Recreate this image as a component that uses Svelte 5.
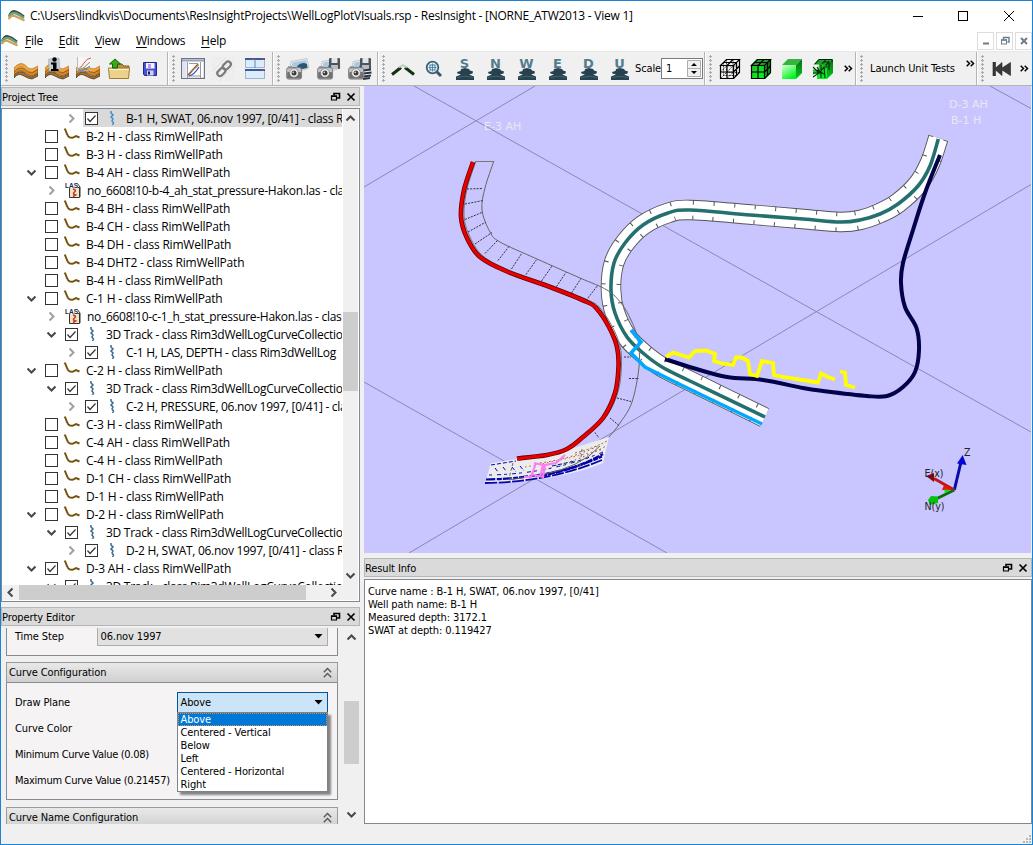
<script>
  // ---- project tree -------------------------------------------------------
  const tree = [
    { d: 3, a: 'closed', c: true, i: 'curve', t: 'B-1 H, SWAT, 06.nov 1997, [0/41] - class R', sel: true },
    { d: 1, c: false, i: 'well', t: 'B-2 H - class RimWellPath' },
    { d: 1, c: false, i: 'well', t: 'B-3 H - class RimWellPath' },
    { d: 1, a: 'open', c: false, i: 'well', t: 'B-4 AH - class RimWellPath' },
    { d: 2, a: 'closed', i: 'las', t: 'no_6608!10-b-4_ah_stat_pressure-Hakon.las - cla' },
    { d: 1, c: false, i: 'well', t: 'B-4 BH - class RimWellPath' },
    { d: 1, c: false, i: 'well', t: 'B-4 CH - class RimWellPath' },
    { d: 1, c: false, i: 'well', t: 'B-4 DH - class RimWellPath' },
    { d: 1, c: false, i: 'well', t: 'B-4 DHT2 - class RimWellPath' },
    { d: 1, c: false, i: 'well', t: 'B-4 H - class RimWellPath' },
    { d: 1, a: 'open', c: false, i: 'well', t: 'C-1 H - class RimWellPath' },
    { d: 2, a: 'closed', i: 'las', t: 'no_6608!10-c-1_h_stat_pressure-Hakon.las - class' },
    { d: 2, a: 'open', c: true, i: 'curve', t: '3D Track - class Rim3dWellLogCurveCollectio' },
    { d: 3, a: 'closed', c: true, i: 'curve', t: 'C-1 H, LAS, DEPTH - class Rim3dWellLog' },
    { d: 1, a: 'open', c: false, i: 'well', t: 'C-2 H - class RimWellPath' },
    { d: 2, a: 'open', c: true, i: 'curve', t: '3D Track - class Rim3dWellLogCurveCollectio' },
    { d: 3, a: 'closed', c: true, i: 'curve', t: 'C-2 H, PRESSURE, 06.nov 1997, [0/41] - cla' },
    { d: 1, c: false, i: 'well', t: 'C-3 H - class RimWellPath' },
    { d: 1, c: false, i: 'well', t: 'C-4 AH - class RimWellPath' },
    { d: 1, c: false, i: 'well', t: 'C-4 H - class RimWellPath' },
    { d: 1, c: false, i: 'well', t: 'D-1 CH - class RimWellPath' },
    { d: 1, c: false, i: 'well', t: 'D-1 H - class RimWellPath' },
    { d: 1, a: 'open', c: false, i: 'well', t: 'D-2 H - class RimWellPath' },
    { d: 2, a: 'open', c: true, i: 'curve', t: '3D Track - class Rim3dWellLogCurveCollectio' },
    { d: 3, a: 'closed', c: true, i: 'curve', t: 'D-2 H, SWAT, 06.nov 1997, [0/41] - class R' },
    { d: 1, a: 'open', c: true, i: 'well', t: 'D-3 AH - class RimWellPath' },
    { d: 2, a: 'open', c: true, i: 'curve', t: '3D Track - class Rim3dWellLogCurveCollectio' }
  ];
  const menus = ['File', 'Edit', 'View', 'Windows', 'Help'];
  const planes = ['Above', 'Centered - Vertical', 'Below', 'Left', 'Centered - Horizontal', 'Right'];
  const info = ['Curve name : B-1 H, SWAT, 06.nov 1997, [0/41]', 'Well path name: B-1 H', 'Measured depth: 3172.1', 'SWAT at depth: 0.119427'];

  // ---- 3D view geometry ---------------------------------------------------
  // Catmull-Rom spline through the points, as cubic Bezier segments.
  function smooth(p) {
    let s = `M${p[0][0]} ${p[0][1]}`;
    for (let i = 0; i < p.length - 1; i++) {
      const a = p[i - 1] ?? p[i], b = p[i], c = p[i + 1], e = p[i + 2] ?? c;
      s += `C${b[0] + (c[0] - a[0]) / 6} ${b[1] + (c[1] - a[1]) / 6} ${c[0] - (e[0] - b[0]) / 6} ${c[1] - (e[1] - b[1]) / 6} ${c[0]} ${c[1]}`;
    }
    return s;
  }
  const teal = smooth([[938.3, 139], [930, 166], [918, 186], [898, 204], [880, 214], [860, 220], [840, 222], [803, 219], [750, 215], [690, 210], [668, 213], [643, 225], [625, 243], [614, 263], [611, 290], [615, 313], [627, 337], [643, 353], [662, 367], [690, 381], [765, 417]]);
  const ribbon = smooth([[938.3, 138], [930, 163], [918, 184], [898, 203], [880, 213], [860, 220], [840, 222], [803, 219], [750, 214.5], [690, 210], [668, 213], [643, 225], [625, 243], [614, 263], [611, 290], [615, 313], [627, 337], [643, 353], [662, 367], [690, 381], [764.5, 417.5]]);
  const red = smooth([[473, 162], [464, 190], [461, 217], [467, 238], [480, 257], [507, 271.5], [550, 287], [587, 302], [597, 309], [609, 327], [617, 347], [618.5, 367], [615, 393], [603, 418], [583, 437], [567, 449], [547, 455], [517, 458.5]]);
  const outer = smooth([[493.7, 161.5], [485, 188], [482, 210], [490, 232], [500, 242], [537, 259], [580, 278], [607, 290], [621, 303], [631, 320], [638, 340], [639, 367], [632, 402], [620, 423], [608, 438], [593, 453], [560, 470], [510, 479]]);
  const navy = smooth([[940, 155], [925, 193], [913, 230], [903, 263], [901, 283], [905, 307], [916.5, 328], [919, 350], [915, 372], [903, 387], [887, 396], [867, 396], [823, 391], [803, 388], [763, 380], [727, 377], [693, 368], [665, 359]]);
  const rungs = [[467, 189, 483, 188.5], [465, 204, 483, 200.5], [465, 219.5, 483, 212], [468, 232, 486, 222], [475, 244, 492, 232.5], [485, 253.5, 497.5, 240.5], [498, 260.5, 509, 246.5], [511.5, 269, 522, 253], [526, 274.5, 537, 259], [541.5, 281, 552, 266], [556.5, 286.5, 566, 272.5], [571.5, 293, 581, 278.5], [586, 300.5, 598, 285], [624, 357, 631, 357], [629, 378.5, 639, 378.5], [617, 398, 631, 401.5], [610, 418, 619, 425.5], [595, 432.5, 599, 438]];

  const views = ['S', 'N', 'W', 'E', 'D', 'U'];
</script>

{#snippet logo(w)}
  <svg width={w} height="13" viewBox="0 0 16 13" class="logo">
    <path d="M.5 7Q3 1.500 6.500 2.200T15.500 7.500" stroke="#384b3c" stroke-width="2" fill="none" />
    <path d="M.5 8Q3 3.500 6 4T15.500 9" stroke="#6aa276" stroke-width="2.600" fill="none" />
    <path d="M0 10Q3 5.800 6 7T16 11.500" stroke="#d5a158" stroke-width="2.200" fill="none" />
  </svg>
{/snippet}

{#snippet winBtns()}
  <svg class="dockbtns" width="28" height="12" viewBox="0 0 28 12" fill="none" stroke="#000">
    <path d="M4 4V2.500H9.500V7H7" stroke-width="1.600" /><path d="M1.500 5.300H6.500V9H1.500z" stroke-width="1.200" /><path d="M1 5h6" stroke-width="1.500" />
    <path d="M17.500 2.500L24.500 9.500M24.500 2.500L17.500 9.500" stroke-width="1.700" />
  </svg>
{/snippet}

{#snippet chev(dir)}
  <svg class="chev" width="11" height="11" viewBox="0 0 11 11" fill="none" stroke={dir === 'treeclosed' ? '#a0a0a0' : '#484848'} stroke-width="2">
    {#if dir === 'up'}<path d="M1.500 7.500L5.500 3.500L9.500 7.500" />
    {:else if dir === 'down'}<path d="M1.500 3.500L5.500 7.500L9.500 3.500" />
    {:else if dir === 'left'}<path d="M7.500 1.500L3.500 5.500L7.500 9.500" />
    {:else}<path d="M3.500 1.500L7.500 5.500L3.500 9.500" />{/if}
  </svg>
{/snippet}

{#snippet layers()}
  <path d="M0 11Q6 4 11 8Q14 12 18 12L24 9V12L18 15.500Q14 15 10 11T0 15z" fill="#f7a530" stroke="#a8610e" stroke-width=".6" />
  <path d="M0 15.500Q6 8.500 10 12Q14 16 18 16L24 12.500V15.500L18 19Q14 18.500 10 15T0 18z" fill="#e08a20" stroke="#673b0c" stroke-width=".7" />
  <path d="M0 19Q6 12.500 10 16Q14 20 18 20L24 16.500V19L18 22Q14 21.500 9 18.500T0 21z" fill="#a87331" stroke="#4e3312" stroke-width=".8" />
{/snippet}

{#snippet camera(n)}
  <svg width="24" height="22" viewBox="0 0 24 22">
    <path d="M5 3.500L21 .5L23 10L18 12H3.500z" fill="#e9edf0" stroke="#a9b0b6" stroke-width=".6" />
    <path d="M6.500 4.500L20 2L21.500 9L16 11H5z" fill="#a9cbe2" /><path d="M11 8Q16 3 21 6L21.500 10L14 11.500z" fill="#2f5470" />
    {#if n > 0}
      <rect x="12" y="0" width="11" height="11" rx="1" fill="#505357" /><rect x="14.500" y="0" width="6" height="5" fill="#e2e6ea" /><rect x="14" y="7" width="7" height="4" fill="#b8bec6" />
    {/if}
    {#if n > 1}<path d="M15 12.500L23 11.500M16 15.500L23.500 14.500M16 18.500L23 17.500M15 21L22 20" stroke="#2a3542" stroke-width="1.800" />{/if}
    <rect x=".6" y="9.600" width="15" height="11.500" rx="2" fill="#c2c2c2" stroke="#6a6a6a" stroke-width=".8" /><rect x="1.200" y="14" width="13.800" height="6.500" rx="1" fill="#707070" />
    <circle cx="8" cy="15" r="4.300" fill="#f4f4f4" stroke="#777" stroke-width=".6" /><circle cx="8" cy="15" r="2.500" fill="#3c3c3c" /><circle cx="7.300" cy="14.300" r=".9" fill="#ccc" />
    <rect x="2" y="8.300" width="4" height="2" fill="#888" />
  </svg>
{/snippet}

{#snippet cube(kind)}
  <svg width="22" height="22" viewBox="0 0 22 22">
    <defs>
      <linearGradient id="cf-{kind}" x1="0" y1="0" x2=".6" y2="1"><stop offset="0" stop-color={kind === 'surf' ? '#d8ffd8' : '#36b336'} /><stop offset="1" stop-color="#00f51c" /></linearGradient>
      <linearGradient id="cs-{kind}" x1="0" y1="0" x2="0" y2="1"><stop offset="0" stop-color="#0a6b14" /><stop offset="1" stop-color="#00c81b" /></linearGradient>
    </defs>
    {#if kind !== 'wire'}
      <path d="M1 7L7 1H21L15 7z" fill={kind === 'surf' ? '#35b33e' : '#1fa02a'} /><path d="M1 7H15V21H1z" fill="url(#cf-{kind})" /><path d="M15 7L21 1V15L15 21z" fill="url(#cs-{kind})" />
    {/if}
    {#if kind === 'wire' || kind === 'grid'}
      <path d="M1.500 7.500L7.500 1.500H20.500L14.500 7.500zM1.500 7.500V20.500H14.500V7.500M14.500 20.500L20.500 14.500V1.500M8 7.500V20.500M1.500 14H14.500M8 7.500L14 1.500M4.500 4.500H17.500V17.500M14.500 14L20.500 8" fill="none" stroke="#000" stroke-width="1.200" />
    {/if}
    {#if kind === 'wire'}<path d="M7.500 1.500V14.500H20.500M1.500 20.500L7.500 14.500M4.500 4.500V17.500H17.500M14 1.500V14.500M7.500 8H20.500M8 14L14 8M1.500 14L7.500 8M8 20.500L14 14.500" fill="none" stroke="#000" stroke-width=".7" stroke-dasharray="2 1" />{/if}
    {#if kind === 'fault'}
      <path d="M0 6.500H7L6 12L0 11zM0 17L5 15V21H0z" fill="#f0f0f0" /><path d="M7 1.500H20M7 1.500L3 6M14 1.500L10 6M12 4H17M20 1.500V4M14 10V7L17 4V12M1 9L7 15L1 19M5 12L12 16M9 7V20M5 9L8 14L12 9L13 20M1 15H9" fill="none" stroke="#02290a" stroke-width="1.100" />
    {/if}
  </svg>
{/snippet}

{#snippet more()}
  <svg class="more" width="9" height="7" viewBox="0 0 9 7" fill="none" stroke="#000" stroke-width="1.500"><path d="M.7.700L3.500 3.500L.7 6.300M4.700.700L7.500 3.500L4.700 6.300" /></svg>
{/snippet}

<div class="window">
  <header class="title ui">
    {@render logo(17)}
    <span class="caption">C:\Users\lindkvis\Documents\ResInsightProjects\WellLogPlotVIsuals.rsp - ResInsight - [NORNE_ATW2013 - View 1]</span>
    <svg class="sys" width="104" height="12" viewBox="0 0 104 12" fill="none" stroke="#000"><path d="M1 6.500H11" /><rect x="46.500" y="1.500" width="9" height="9" /><path d="M92 1L102 11M102 1L92 11" /></svg>
  </header>

  <nav class="menu ui">
    {@render logo(17)}
    {#each menus as m}<span class="item"><u>{m[0]}</u>{m.slice(1)}</span>{/each}
    <div class="mdi">
      <span><svg width="14" height="14" viewBox="0 0 14 14"><path d="M4 9.500h6" stroke="#6d7c8c" stroke-width="2" /></svg></span>
      <span><svg width="14" height="14" viewBox="0 0 14 14" fill="none" stroke="#6d7c8c"><path d="M5.500 5V3.500H11V8H9.500" stroke-width="1.400" /><rect x="3.500" y="6" width="5" height="4" /><path d="M3 6h6" stroke-width="1.500" /></svg></span>
      <span><svg width="14" height="14" viewBox="0 0 14 14"><path d="M4 4L10 10M10 4L4 10" stroke="#6d7c8c" stroke-width="2" /></svg></span>
    </div>
  </nav>

  <div class="toolbars dlg">
    <section class="tb g1">
      <i class="grip"></i>
      <span class="b"><svg width="24" height="24" viewBox="0 0 24 24">{@render layers()}</svg></span>
      <span class="b"><svg width="24" height="24" viewBox="0 0 24 24">{@render layers()}<path d="M3.500 2L14 1L15 13L4 14z" fill="#c4ccd4" stroke="#9aa3ad" stroke-width=".5" /><circle cx="9.500" cy="2.500" r="2.200" /><path d="M6 5.500h5.500v6.500h2v2H6v-2h2v-4.500H6z" /></svg></span>
      <span class="b"><svg width="24" height="24" viewBox="0 0 24 24">{@render layers()}<path d="M1 0H15V9L1 13.500z" fill="#f6f6f9" /><path d="M1.500 0V14L16 13" stroke="#bbb" fill="none" /><path d="M2 12Q5 11 8 6T15 1" stroke="#e0505a" fill="none" /><path d="M2 13Q8 12 14 5" stroke="#58b058" fill="none" /><path d="M2 14Q9 14 14 9" stroke="#7a7ad8" fill="none" /></svg></span>
      <span class="b"><svg width="24" height="22" viewBox="0 0 24 22"><path d="M10 6h5l2 2h5v5H10z" fill="#b99345" stroke="#7c6026" /><path d="M1.500 10H22.500L21.500 20.500H2.500z" fill="#ead28a" stroke="#a07d33" /><path d="M2 11.500H22" stroke="#fff3c2" /><path d="M8 1L13.500 6H10.500V10H5.500V6H2.500z" fill="#39a81d" stroke="#176307" /></svg></span>
      <span class="b"><svg width="16" height="16" viewBox="0 0 16 16"><path d="M1.500 1.500H14.500V14.500H2.500L1.500 13z" fill="#4a52cf" stroke="#22258c" /><rect x="4" y="2" width="8.500" height="5.500" fill="#f2f5ff" /><path d="M6 4h3M6 6h3" stroke="#70c" stroke-width=".8" /><rect x="5" y="9.500" width="6.500" height="5" fill="#cfd3f2" /><rect x="6" y="10.500" width="2" height="3" fill="#1a1a60" /></svg></span>
    </section>
    <section class="tb g2">
      <i class="grip"></i>
      <span class="b"><svg width="24" height="21" viewBox="0 0 24 21"><rect x=".6" y=".6" width="22.800" height="19.800" fill="#fff" stroke="#6b7484" stroke-width="1.200" /><path d="M1 2.500H23" stroke="#93a3c2" stroke-width="2" /><path d="M1.500 4H5.500V20H1.500z" fill="#dfe5f0" /><path d="M6.500 4V20M19.500 4V20M6 18H19M8 5.500h9" stroke="#999" /><path d="M7 17L17 6" stroke="#e03131" stroke-width="1.300" /><path d="M8 18Q13 17 18 9" stroke="#3a42cf" fill="none" stroke-width="1.200" /><path d="M8 17.500Q11 12 18 7" stroke="#3bb440" fill="none" /></svg></span>
      <span class="b hatched"><svg width="18" height="18" viewBox="0 0 18 18" fill="none" stroke="#7b7b7b" stroke-width="2.200"><rect x="-3.600" y="-2.500" width="9" height="5.500" rx="2.700" transform="translate(11 6) rotate(-45)" /><rect x="-5" y="-2.500" width="9" height="5.500" rx="2.700" transform="translate(6.500 11.500) rotate(-45)" /></svg></span>
      <span class="b"><svg width="20" height="21" viewBox="0 0 20 21"><rect x=".5" y=".5" width="19" height="9" fill="#deebfa" stroke="#9ab4d4" /><rect x=".5" y="11.500" width="19" height="9" fill="#deebfa" stroke="#9ab4d4" /><path d="M0 1H20M0 12H20" stroke="#2f5f9e" stroke-width="2" /><path d="M10 1V10" stroke="#5f86b8" /><path d="M7 1h2M17 1h2M17 12h2" stroke="#d33" stroke-width="1.500" /></svg></span>
    </section>
    <section class="tb g2">
      <i class="grip"></i>
      {#each [0, 1, 2] as n}<span class="b">{@render camera(n)}</span>{/each}
    </section>
    <section class="tb g4">
      <i class="grip"></i>
      <span class="b"><svg width="24" height="14" viewBox="0 0 24 14" fill="none"><path d="M1 12.500L10 5.500" stroke="#12330f" stroke-width="3" /><path d="M23 12.500L14 5.500" stroke="#12330f" stroke-width="3" /><path d="M8 5.500L12 3L16 5.500" stroke="#c3cdc3" stroke-width="1.800" /></svg></span>
      <span class="b"><svg width="18" height="18" viewBox="0 0 18 18" fill="none"><path d="M11 11L16 16" stroke="#39576a" stroke-width="3" /><circle cx="7.500" cy="7.500" r="5.800" fill="#e6f2fa" stroke="#41606f" stroke-width="1.800" /><rect x="5" y="5" width="5" height="5" stroke="#3b7aa0" /><path d="M7.500 3.500v8M3.500 7.500h8" stroke="#5b8aa6" /></svg></span>
      {#each views as v}
        <span class="b view"><b>{v}</b><svg width="18" height="12" viewBox="0 0 18 12"><path d="M5 1L9 0L13 1L14 2.500L17 3.500L16.500 5.500L13 6.500L18 8.500V12H0V8.500L5 6.500L1.500 5.500L1 4L4.500 3z" fill="#27414e" /><path d="M1 9.500Q9 7 17 9.500" stroke="#3f6472" fill="none" /></svg></span>
      {/each}
      <span class="scale">Scale</span>
      <span class="spin"><span>1</span><i><svg width="14" height="17" viewBox="0 0 14 17"><path d="M.5.500H13.500V16.500H.5zM.5 8.500H13.500" fill="#f0f0f0" stroke="#adadad" /><path d="M4 6L7 3L10 6zM4 11L7 14L10 11z" /></svg></i></span>
    </section>
    <section class="tb g5">
      <i class="grip"></i>
      {#each ['wire', 'grid', 'surf', 'fault'] as k}<span class="b">{@render cube(k)}</span>{/each}
      {@render more()}
    </section>
    <section class="tb g6">
      <i class="grip"></i>
      <span class="launch">Launch Unit Tests</span>
      <span class="raise">{@render more()}</span>
    </section>
    <section class="tb g7">
      <i class="grip"></i>
      <span class="b"><svg width="20" height="14" viewBox="0 0 20 14"><path d="M1 0H3.500V6L10 .5V6L18.500 .5V13.500L10 8V13.500L3.500 8V14H1z" fill="#3a3a3a" stroke="#222" stroke-width=".6" /></svg></span>
      {@render more()}
    </section>
  </div>

  <main>
    <div class="left">
      <div class="dock dlg"><span>Project Tree</span>{@render winBtns()}</div>
      <div class="tree">
        <div class="rows ui">
          {#each tree as r}
            <div class="row d{r.d}">
              <span class="arrow">{#if r.a}{@render chev(r.a === 'open' ? 'down' : 'treeclosed')}{/if}</span>
              <div class="cell" class:sel={r.sel}>
                {#if r.c !== undefined}
                  <svg class="check" width="13" height="13" viewBox="0 0 13 13" fill="none"><rect x=".5" y=".5" width="12" height="12" fill="#fff" stroke="#333" />{#if r.c}<path d="M2.500 6.500L5 9.500L10.500 3.500" stroke="#333" stroke-width="1.200" />{/if}</svg>
                {/if}
                <span class="ico {r.i}">
                  {#if r.i === 'well'}<svg width="16" height="13" viewBox="0 0 16 13"><path d="M.8.500L3 6Q4 9 6 9.500L8.500 9.800L12 8L15.500 9.500" fill="none" stroke="#77520e" stroke-width="2" /></svg>
                  {:else if r.i === 'curve'}<svg width="6" height="14" viewBox="0 0 6 14"><path d="M2 0V2L4 4L2 6L4 8L3 10L4.500 12L3.500 14" fill="none" stroke={r.sel ? '#3d8fd0' : '#3a6a92'} stroke-width="1.500" /></svg>
                  {:else}<svg width="16" height="16" viewBox="0 0 16 16"><path d="M4.500 5.500H14.500V15.500H4.500z" fill="#f4e4c4" stroke="#333" /><path d="M12 1L15 5V15" stroke="#333" fill="none" /><path d="M8 7Q12 8 9.500 10T10.500 13L8 14.500" fill="none" stroke="#c0392b" stroke-width="1.600" /><rect width="12.500" height="6" fill="#fff" /><text x="0" y="5.500" class="las-t">LAS</text></svg>{/if}
                </span>
                <span class="txt t-{r.i}">{r.t}</span>
              </div>
            </div>
          {/each}
        </div>
        <div class="vs">{@render chev('up')}<div class="thumb t-tree"></div><div class="grow"></div>{@render chev('down')}</div>
        <div class="hs">{@render chev('left')}<div class="hthumb"></div><div class="grow"></div>{@render chev('right')}</div>
      </div>

      <div class="dock second dlg"><span>Property Editor</span>{@render winBtns()}</div>
      <div class="props dlg">
        <div class="form">
          <div class="box top"><span class="lbl">Time Step</span><div class="combo grey"><span>06.nov 1997</span><svg width="9" height="5" viewBox="0 0 9 5"><path d="M.5 0H8.500L4.500 4.500z" /></svg></div></div>
          <div class="gh"><span>Curve Configuration</span><svg width="9" height="12" viewBox="0 0 9 12" fill="none" stroke="#555" stroke-width="1.300"><path d="M.8 5.200L4.500 1.500L8.200 5.200M.8 10.200L4.500 6.500L8.200 10.200" /></svg></div>
          <div class="box cfg">
            <div class="f"><span class="lbl">Draw Plane</span>
              <div class="combo active"><span>Above</span><svg width="9" height="5" viewBox="0 0 9 5"><path d="M.5 0H8.500L4.500 4.500z" /></svg>
                <ul class="popup">{#each planes as p, i}<li class:on={i === 0}>{p}</li>{/each}</ul>
              </div>
            </div>
            <div class="f"><span class="lbl">Curve Color</span></div>
            <div class="f"><span class="lbl num">Minimum Curve Value (0.08)</span></div>
            <div class="f"><span class="lbl num">Maximum Curve Value (0.21457)</span></div>
          </div>
          <div class="gh last"><span>Curve Name Configuration</span><svg width="9" height="12" viewBox="0 0 9 12" fill="none" stroke="#555" stroke-width="1.300"><path d="M.8 5.200L4.500 1.500L8.200 5.200M.8 10.200L4.500 6.500L8.200 10.200" /></svg></div>
        </div>
        <div class="vs pv">{@render chev('up')}<div class="thumb t-prop"></div><div class="grow"></div>{@render chev('down')}</div>
      </div>
    </div>

    <div class="right">
      <svg class="view3d" width="667" height="467" viewBox="364 86 667 467" fill="none">
        <rect x="364" y="86" width="667" height="467" fill="#c8c5ff" />
        <g stroke="#8a88b4" stroke-width="1">
          <path d="M414 86L1031 432M535 86L364 187M1031 184.500L409 553M364 382L667 553M990 86L1031 108.500" />
        </g>
        <g class="lab"><text x="484" y="130">E-3 AH</text><text x="949" y="108">D-3 AH</text><text x="951" y="124">B-1 H</text></g>

        <path d={ribbon} stroke="#555" stroke-width="20.500" />
        <path d={ribbon} stroke="#fff" stroke-width="18.700" />
        <path d={ribbon} stroke="#555" stroke-width="19.500" stroke-dasharray="1 19.500" />
        <path d={ribbon} stroke="#fff" stroke-width="11" />
        <path d={teal} stroke="#24706e" stroke-width="3.600" />

        <path d={outer} stroke="#666" />
        <path d={red} stroke="#777" transform="translate(3 -1)" />
        <path d="M475 161.500H494" stroke="#777" />
        {#each rungs as r}<path d="M{r[0]} {r[1]}L{r[2]} {r[3]}" stroke="#333" stroke-dasharray="2 1.200" />{/each}

        <path d="M490.700 463.300L517 459L567 450L609 437L603 463Q560 481 485 484z" fill="#ececee" />
        <g stroke="#0404a8">
          <path d="M485 483Q550 482 602 460" stroke-width="1.800" stroke-dasharray="12 1.500" />
          <path d="M486 479.500Q555 478 602 456.500" stroke-width="2.200" stroke-dasharray="9 1.500 5 1" />
          <path d="M540 476Q575 470 603 454" stroke-width="2.400" stroke-dasharray="7 1" />
          <path d="M489 475Q550 474 603 452" stroke-dasharray="3 5 4 3" />
          <path d="M491 465L516 461M495 468l3 4M503 467l3 4M512 467l4 5M520 466l4 5M552 466L575 461" stroke-dasharray="4 2" />
        </g>
        <g stroke-dasharray="1.500 3">
          <path d="M566 463Q588 456 606 446" stroke="#8a3a2a" /><path d="M575 453Q592 449 607 441" stroke="#9a6a2a" stroke-dasharray="2 2" />
          <path d="M525 467Q560 461 604 449" stroke="#b05a20" /><path d="M540 463Q575 458 600 445" stroke="#a03020" /><path d="M556 466L590 458" stroke="#2a8a5a" />
        </g>
        <path d="M600 446Q580 468 540 475T512 478" stroke="#666" /><path d="M513 463L509 478M582 449L580 466" stroke="#666" stroke-dasharray="3 2" />
        <path d="M524 477H531L536 463M540 477L543 465L534 463M531 474L543 477L545 465L556 463L565 455" stroke="#ff7df0" stroke-width="2.200" />
        <path d={red} stroke="#6a0000" stroke-width="4.600" /><path d={red} stroke="#e80000" stroke-width="3" />

        <path d="M631 330L641 342L631 353L645 367L677 383L710 399L762 424" stroke="#00a8ff" stroke-width="3.600" />
        <path d={navy} stroke="#02024a" stroke-width="4" />
        <path d="M666 357L673 352.500L689 357.500L695 351L706 350.500L715 354L714 361L722 363.500L733 365L736 357.500L742 357.500L748 361L750 374L757 376L762 361L773 363L774 375L783 377L818 382.500L821 373.500L828 377L835 379.500M840 371.500L845 372.500L846 385L855 387.500" stroke="#ff0" stroke-width="3.800" />

        <path d="M954.300 490L961 462" stroke="#0a0aa8" stroke-width="3" /><path d="M962.700 455L966.500 465L957 463.500z" fill="#0505d8" />
        <path d="M954.300 490L934 478.500" stroke="#c01515" stroke-width="3" /><path d="M955 490L944 485L942 490z" fill="#f01010" /><path d="M926 476L934 473L934 482z" fill="#8d0808" />
        <path d="M954.300 490L936 499" stroke="#0b6e0b" stroke-width="3" /><path d="M944 489.500L951 490L945 493z" fill="#0ee60e" /><path d="M928 500L931 496L938 496.500L938 503L930 505z" fill="#08c008" />
        <g class="axes"><text x="964" y="456">Z</text><text x="924.500" y="477">E(x)</text><text x="924.500" y="510">N(y)</text></g>
      </svg>
      <div class="dock res dlg"><span>Result Info</span>{@render winBtns()}</div>
      <div class="result dlg">{#each info as l}<div>{l}</div>{/each}</div>
    </div>
  </main>
  <footer><svg width="10" height="10" viewBox="0 0 10 10" fill="#b8b8b8"><path d="M7 1h2v2H7zM7 4h2v2H7zM7 7h2v2H7zM4 4h2v2H4zM4 7h2v2H4zM1 7h2v2H1z" /></svg></footer>
</div>

<style>
  :global(body) { background: #f0f0f0; overflow: hidden; }
  .window { box-sizing: border-box; width: 1033px; height: 845px; border: 1px solid #1883d7; background: #f0f0f0; display: flex; flex-direction: column; color: #000; overflow: hidden; }
  .ui { font: 12px "Open Sans", "Noto Sans", sans-serif; letter-spacing: -0.25px; white-space: nowrap; }
  .dlg { font: 11px "DejaVu Sans Condensed", "DejaVu Sans", sans-serif; font-stretch: condensed; letter-spacing: -0.11px; white-space: nowrap; }
  svg { display: block; flex: none; }
  .grow { flex: 1; }

  .title { height: 29px; flex: none; background: #fff; display: flex; align-items: center; padding: 0 16px 0 7px; }
  .caption { margin-left: 5px; flex: 1; }
  .menu { height: 22px; flex: none; background: #fff; display: flex; align-items: center; border-bottom: 1px solid #e8e8e8; box-sizing: border-box; }
  .menu .item { margin-right: 15.800px; }
  .menu .logo { margin-right: 7px; }
  .menu u { text-underline-offset: 2px; }
  .mdi { margin-left: auto; display: flex; gap: 2px; }
  .mdi span { border: 1px solid #ddd; width: 15px; height: 16px; display: grid; place-items: center; }

  .toolbars { height: 34px; flex: none; display: flex; border-bottom: 1px solid #b4b4b4; box-sizing: border-box; }
  .tb { display: flex; align-items: center; box-sizing: border-box; border-right: 1px solid #b4b4b4; border-left: 1px solid #fff; height: 33px; flex: none; }
  .g1 { width: 167px; } .g2 { width: 105px; } .g4 { width: 327px; } .g5 { width: 151px; } .g6 { width: 121px; } .g7 { width: 55px; border-right: 0; }
  .grip { width: 3px; height: 27px; flex: none; margin: 0 2px 0 3px; background: radial-gradient(circle at 1.500px 1.500px, #aaa 1px, transparent 1.400px) 0 0 / 3px 4px; }
  .b { width: 31px; height: 28px; display: grid; place-items: center; flex: none; }
  .hatched { background: repeating-linear-gradient(135deg, #f0f0f0 0 2px, #e7e7e7 2px 3px); background-clip: content-box; padding: 2px 4px; box-sizing: border-box; }
  .view { align-content: center; }
  .view b { font: bold 13px/11px "DejaVu Sans", sans-serif; color: #557b8e; height: 10px; letter-spacing: 0; }
  .scale { width: 26px; }
  .spin { display: flex; align-items: center; justify-content: space-between; box-sizing: border-box; width: 42px; height: 21px; border: 1px solid #7a7a7a; background: #fff; padding: 0 1px 0 4px; flex: none; }
  .more { margin-left: 6px; }
  .launch { margin-left: 2px; width: 93px; padding-left: 3px; box-sizing: border-box; }
  .raise { margin-bottom: 11px; }
  .g7 .more { margin-left: 3px; }

  main { flex: 1; display: flex; min-height: 0; }
  .left { width: 359px; flex: none; margin-right: 4px; display: flex; flex-direction: column; padding-top: 1px; }
  .right { width: 668px; flex: none; display: flex; flex-direction: column; }
  .dock { box-sizing: border-box; height: 19px; flex: none; border: 1px solid #b6b6b6; background: #dadada; display: flex; align-items: center; justify-content: space-between; padding: 0 1px 0 0; }
  .dock span { padding-top: 1px; }
  .tree { margin-top: 2px; box-sizing: border-box; height: 494px; flex: none; border: 1px solid #828790; background: #fff; display: grid; grid-template-columns: 341px 15px; grid-template-rows: 476px 15px; overflow: hidden; }
  .rows { overflow: hidden; padding-right: 1px; }
  .row { display: flex; height: 18px; align-items: center; }
  .arrow { width: 11px; margin-right: 6px; flex: none; }
  .d1 { padding-left: 24px; } .d2 { padding-left: 44px; } .d3 { padding-left: 64px; }
  .cell { flex: 1; min-width: 0; display: flex; align-items: center; height: 18px; padding-left: 2px; overflow: hidden; }
  .cell.sel { background: #d9d9d9; }
  .check { margin-right: 6px; }
  .ico { width: 16px; height: 16px; margin-right: 6px; display: flex; align-items: center; justify-content: center; flex: none; }
  .ico.well { align-items: flex-start; }
  .las-t { font: bold 6.500px "Liberation Sans", sans-serif; letter-spacing: 0; fill: #1d2d44; }
  .txt { flex: none; letter-spacing: -0.290px; }
  .txt.t-well { letter-spacing: -0.190px; }
  .vs { background: #f0f0f0; display: flex; flex-direction: column; align-items: center; box-sizing: border-box; padding: 4px 0; }
  .thumb { width: 15px; background: #cdcdcd; }
  .t-tree { height: 79px; margin-top: 188px; }
  .t-prop { height: 63px; margin-top: 58px; }
  .hs { grid-column: 1 / 3; background: #f0f0f0; display: flex; align-items: center; padding: 0 19px 0 3px; }
  .hthumb { width: 287px; height: 15px; background: #cdcdcd; margin-left: 3px; }

  .second { margin-top: 5px; }
  .props { margin-top: 2px; height: 196px; flex: none; display: flex; overflow: hidden; }
  .form { width: 332px; margin-left: 5px; }
  .box { box-sizing: border-box; border: 1px solid #868b94; background: #f5f3f4; }
  .top { border-top: 0; height: 28px; display: flex; padding-left: 8px; }
  .top .lbl { width: 82px; line-height: 17px; }
  .combo { box-sizing: border-box; display: flex; align-items: center; justify-content: space-between; padding: 0 4px 0 2.500px; }
  .grey { width: 231px; height: 18px; border: 1px solid #adadad; border-top: 0; background: #e1e1e1; }
  .gh { box-sizing: border-box; margin-top: 6px; height: 21px; border: 1px solid #9a9a9a; border-bottom-color: #868b94; background: linear-gradient(#e9e9e9, #d0d0d0); display: flex; align-items: center; justify-content: space-between; padding: 0 5px 0 2px; }
  .cfg { border-top: 0; height: 117px; padding: 6px 0 0 8px; }
  .f { height: 26px; display: flex; align-items: center; }
  .f .lbl { width: 162px; }
  .f .num { letter-spacing: -0.290px; }
  .active { position: relative; width: 151px; height: 21px; border: 1px solid #005499; background: #cce4f7; }
  .popup { position: absolute; left: -1px; top: 19px; width: 149px; margin: 0; padding: 0; list-style: none; border: 1px solid #7a828c; background: #fff; box-shadow: 3px 3px 2px rgba(0, 0, 0, .45); z-index: 2; }
  .popup li { height: 13px; line-height: 13px; padding-left: 2.500px; }
  .popup .on { background: #0078d7; color: #fff; outline: 1px dotted #e08a3c; outline-offset: -1px; }
  .last { margin-top: 7px; }
  .pv { width: 15px; margin-left: 6px; }

  .view3d { margin-bottom: 5px; }
  .lab { font: 11px "DejaVu Sans", sans-serif; fill: #e9e8f2; }
  .axes { font: 10.500px "DejaVu Sans Condensed", "DejaVu Sans", sans-serif; fill: #222; }
  .result { margin-top: 2px; box-sizing: border-box; height: 245px; border: 1px solid #828790; background: #fff; padding: 5px 3px; line-height: 13px; }
  footer { height: 20px; flex: none; display: flex; align-items: flex-end; justify-content: flex-end; }
</style>
